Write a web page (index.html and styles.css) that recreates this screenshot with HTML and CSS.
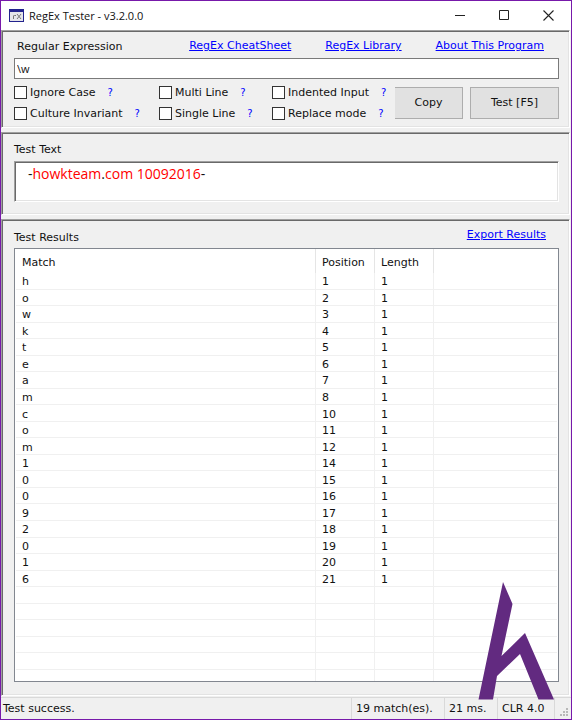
FILE: index.html
```html
<!DOCTYPE html>
<html lang="en">
<head>
    <meta charset="UTF-8">
    <meta name="viewport" content="width=device-width, initial-scale=1.0">
    <title>RegEx Tester - v3.2.0.0</title>
    <link rel="stylesheet" href="styles.css">
</head>
<body>
    <header class="titlebar">
        <svg class="app-icon" width="15" height="13" viewBox="0 0 15 13">
            <rect x="0" y="0" width="15" height="13" fill="#23238e"/>
            <rect x="1" y="3" width="13" height="9" fill="#e4e4ea"/>
            <path d="M4.500 10V6.500M4.500 7.500Q5 6 7 6.500M8 5L12 10M12 5L8 10" fill="none" stroke="#777" stroke-width="1"/>
        </svg>
        <h1>RegEx Tester - v3.2.0.0</h1>
        <div class="window-buttons">
            <button type="button" aria-label="Minimize">
                <svg width="11" height="11" viewBox="0 0 11 11"><path d="M0 5.500H10" stroke="#222"/></svg>
            </button>
            <button type="button" aria-label="Maximize">
                <svg width="11" height="11" viewBox="0 0 11 11"><path d="M.5 .5H9.500V9.500H.5Z" fill="none" stroke="#222"/></svg>
            </button>
            <button type="button" aria-label="Close">
                <svg width="11" height="11" viewBox="0 0 11 11"><path d="M.5 .5L10.500 10.500M10.500 .5L.5 10.500" stroke="#222" stroke-width="1.100"/></svg>
            </button>
        </div>
    </header>

    <main>
        <section class="panel regex-panel">
            <div class="panel-head">
                <label for="regex">Regular Expression</label>
                <nav>
                    <a href="#">RegEx CheatSheet</a>
                    <a href="#">RegEx Library</a>
                    <a href="#">About This Program</a>
                </nav>
            </div>
            <input type="text" id="regex" class="regex-input" value="\w">
            <div class="controls">
                <div class="options">
                    <div class="option"><input type="checkbox" id="ignoreCase"><label for="ignoreCase">Ignore Case</label><a href="#" class="help">?</a></div>
                    <div class="option"><input type="checkbox" id="multiLine"><label for="multiLine">Multi Line</label><a href="#" class="help">?</a></div>
                    <div class="option"><input type="checkbox" id="indented"><label for="indented">Indented Input</label><a href="#" class="help">?</a></div>
                    <div class="option"><input type="checkbox" id="culture"><label for="culture">Culture Invariant</label><a href="#" class="help">?</a></div>
                    <div class="option"><input type="checkbox" id="singleLine"><label for="singleLine">Single Line</label><a href="#" class="help">?</a></div>
                    <div class="option"><input type="checkbox" id="replace"><label for="replace">Replace mode</label><a href="#" class="help">?</a></div>
                </div>
                <button type="button" class="btn btn-copy">Copy</button>
                <button type="button" class="btn btn-test">Test [F5]</button>
            </div>
        </section>

        <section class="panel text-panel">
            <h2 id="textLabel">Test Text</h2>
            <div class="test-text" contenteditable="true" role="textbox" aria-multiline="true" aria-labelledby="textLabel" spellcheck="false">-<mark>howkteam</mark>.<mark>com</mark> <mark>10092016</mark>-</div>
        </section>

        <section class="panel results-panel">
            <div class="panel-head">
                <h2>Test Results</h2>
                <a href="#">Export Results</a>
            </div>
            <div class="results">
                <table>
                    <thead>
                        <tr><th>Match</th><th class="col-num">Position</th><th class="col-num">Length</th><td class="col-rest"></td></tr>
                    </thead>
                    <tbody>
                        <tr><td>h</td><td>1</td><td>1</td><td></td></tr>
                        <tr><td>o</td><td>2</td><td>1</td><td></td></tr>
                        <tr><td>w</td><td>3</td><td>1</td><td></td></tr>
                        <tr><td>k</td><td>4</td><td>1</td><td></td></tr>
                        <tr><td>t</td><td>5</td><td>1</td><td></td></tr>
                        <tr><td>e</td><td>6</td><td>1</td><td></td></tr>
                        <tr><td>a</td><td>7</td><td>1</td><td></td></tr>
                        <tr><td>m</td><td>8</td><td>1</td><td></td></tr>
                        <tr><td>c</td><td>10</td><td>1</td><td></td></tr>
                        <tr><td>o</td><td>11</td><td>1</td><td></td></tr>
                        <tr><td>m</td><td>12</td><td>1</td><td></td></tr>
                        <tr><td>1</td><td>14</td><td>1</td><td></td></tr>
                        <tr><td>0</td><td>15</td><td>1</td><td></td></tr>
                        <tr><td>0</td><td>16</td><td>1</td><td></td></tr>
                        <tr><td>9</td><td>17</td><td>1</td><td></td></tr>
                        <tr><td>2</td><td>18</td><td>1</td><td></td></tr>
                        <tr><td>0</td><td>19</td><td>1</td><td></td></tr>
                        <tr><td>1</td><td>20</td><td>1</td><td></td></tr>
                        <tr><td>6</td><td>21</td><td>1</td><td></td></tr>
                        <tr><td>&nbsp;</td><td></td><td></td><td></td></tr>
                        <tr><td>&nbsp;</td><td></td><td></td><td></td></tr>
                        <tr><td>&nbsp;</td><td></td><td></td><td></td></tr>
                        <tr><td>&nbsp;</td><td></td><td></td><td></td></tr>
                        <tr><td>&nbsp;</td><td></td><td></td><td></td></tr>
                        <tr class="row-cut"><td></td><td></td><td></td><td></td></tr>
                    </tbody>
                </table>
            </div>
        </section>
    </main>

    <footer class="statusbar">
        <span class="status-main">Test success.</span>
        <span class="status-count">19 match(es).</span>
        <span class="status-time">21 ms.</span>
        <span class="status-clr">CLR 4.0</span>
        <svg class="grip" width="12" height="12" viewBox="0 0 12 12" fill="#b8b8b8">
            <path d="M7 1h2v2h-2zM4 4h2v2h-2zM7 4h2v2h-2zM1 7h2v2h-2zM4 7h2v2h-2zM7 7h2v2h-2z"/>
        </svg>
    </footer>

    <svg class="watermark" width="76" height="118" viewBox="0 0 76 118">
        <path d="M25 0L34.500 22L23.500 74L47 51L76 117.500H60.500L42 72L19 94L15 117.500H.5Z" fill="#622a80"/>
    </svg>
</body>
</html>
```

FILE: styles.css
```css
* {
    margin: 0;
    padding: 0;
    box-sizing: border-box;
}

body {
    position: relative;
    display: flex;
    flex-direction: column;
    height: 100vh;
    border: 1px solid #7719aa;
    background-color: #f0f0f0;
    color: #111;
    font-family: Verdana, "DejaVu Sans", sans-serif;
    font-size: 11px;
    line-height: 14px;
}

h1, h2, th {
    font-size: inherit;
    font-weight: normal;
}

a {
    color: #0000ff;
}

button, input {
    font: inherit;
    color: inherit;
}

/* title bar */
.titlebar {
    display: flex;
    align-items: center;
    height: 29px;
    padding: 0 1px 0 8px;
    background-color: #fff;
}

.titlebar h1 {
    flex: 1;
    padding-left: 5px;
    font-family: "Segoe UI", "Open Sans", sans-serif;
    font-size: 11px;
}

.window-buttons {
    display: flex;
}

.window-buttons button {
    display: flex;
    align-items: center;
    justify-content: center;
    width: 44px;
    height: 28px;
    border: none;
    background: none;
}

/* panels */
main {
    flex: 1;
    display: flex;
    flex-direction: column;
    gap: 4px;
    min-height: 0;
    padding-right: 1px;
}

.panel {
    padding: 8px 10px 6px 12px;
    border: 1px solid;
    border-color: #a0a0a0 #fff #fff #a0a0a0;
    box-shadow: inset 1px 1px #696969, inset -1px -1px #e3e3e3;
}

.panel-head {
    display: flex;
    justify-content: space-between;
}

.regex-panel .panel-head {
    padding: 0 15px 4px 3px;
}

.regex-panel .panel-head label {
    padding-top: 1px;
}

.panel-head nav {
    display: flex;
    gap: 34px;
}

.regex-input {
    display: block;
    width: 100%;
    height: 21px;
    padding: 0 2px;
    border: 1px solid #7a7a7a;
    background-color: #fff;
    font-family: "Segoe UI", "Open Sans", sans-serif;
    font-size: 11px;
}

.controls {
    display: flex;
    align-items: center;
    padding-top: 6px;
}

.options {
    flex: 1;
    display: grid;
    grid-template-columns: 145px 113px 1fr;
    row-gap: 6px;
}

.option {
    display: flex;
    align-items: center;
    height: 15px;
    white-space: nowrap;
}

.option input {
    appearance: none;
    width: 13px;
    height: 13px;
    margin-right: 3px;
    border: 1px solid #333;
    background-color: #fff;
}

.option input:checked {
    background-color: #333;
}

.help {
    padding-left: 12px;
    font-size: 10px;
    text-decoration: none;
}

.btn {
    height: 32px;
    border: 1px solid #adadad;
    background-color: #e1e1e1;
}

.btn-copy {
    width: 68px;
    margin-right: 7px;
    border-left: none;
}

.btn-test {
    width: 89px;
}

.text-panel {
    padding-top: 10px;
    padding-bottom: 12px;
}

.test-text {
    height: 41px;
    margin-top: 4px;
    padding: 2px 13px;
    border: 1px solid;
    border-color: #a0a0a0 #fff #fff #a0a0a0;
    box-shadow: inset 1px 1px #696969, inset -1px -1px #e3e3e3;
    background-color: #fff;
    font-family: "Segoe UI", "Open Sans", sans-serif;
    font-size: 14px;
    line-height: 20px;
}

.test-text mark {
    background: none;
    color: #ff0000;
}

/* results list */
.results-panel {
    flex: 1;
    display: flex;
    flex-direction: column;
    min-height: 0;
    padding-bottom: 13px;
}

.results-panel .panel-head {
    padding-right: 13px;
}

.results-panel h2 {
    padding: 3px 0;
}

.results {
    flex: 1;
    min-height: 0;
    padding: 0 1px;
    overflow: hidden;
    border: 1px solid #828790;
    background-color: #fff;
}

.results table {
    width: 100%;
    height: 100%;
    border-spacing: 0;
    table-layout: fixed;
}

.results th, .results td {
    padding: 3px 6px 0;
    border-right: 1px solid #f0f0f0;
    border-bottom: 1px solid #f0f0f0;
    text-align: left;
    line-height: 12px;
}

.results thead th, .results thead td {
    height: 24px;
    border-right-color: #e5e5e5;
    border-bottom: none;
}

.results tr > :last-child {
    border-right: none;
}

.results .col-num {
    width: 59px;
}

.results .col-rest {
    width: 123px;
}

.results .row-cut td {
    height: 11px;
    padding-top: 0;
    border-bottom: none;
}

/* status bar */
.statusbar {
    display: flex;
    height: 22px;
    margin-top: 1px;
    border-top: 1px solid #d9d9d9;
    line-height: 21px;
}

.statusbar span + span {
    padding-left: 4px;
    border-left: 1px solid #d9d9d9;
}

.status-main {
    flex: 1;
    padding-left: 2px;
}

.status-count {
    width: 93px;
}

.status-time {
    width: 53px;
}

.status-clr {
    width: 58px;
    border-right: 1px solid #d9d9d9;
}

.grip {
    align-self: flex-end;
    margin-left: 4px;
}

/* logo mark lies over the list and the status bar */
.watermark {
    position: absolute;
    right: 17px;
    bottom: 19px;
    pointer-events: none;
}
```
